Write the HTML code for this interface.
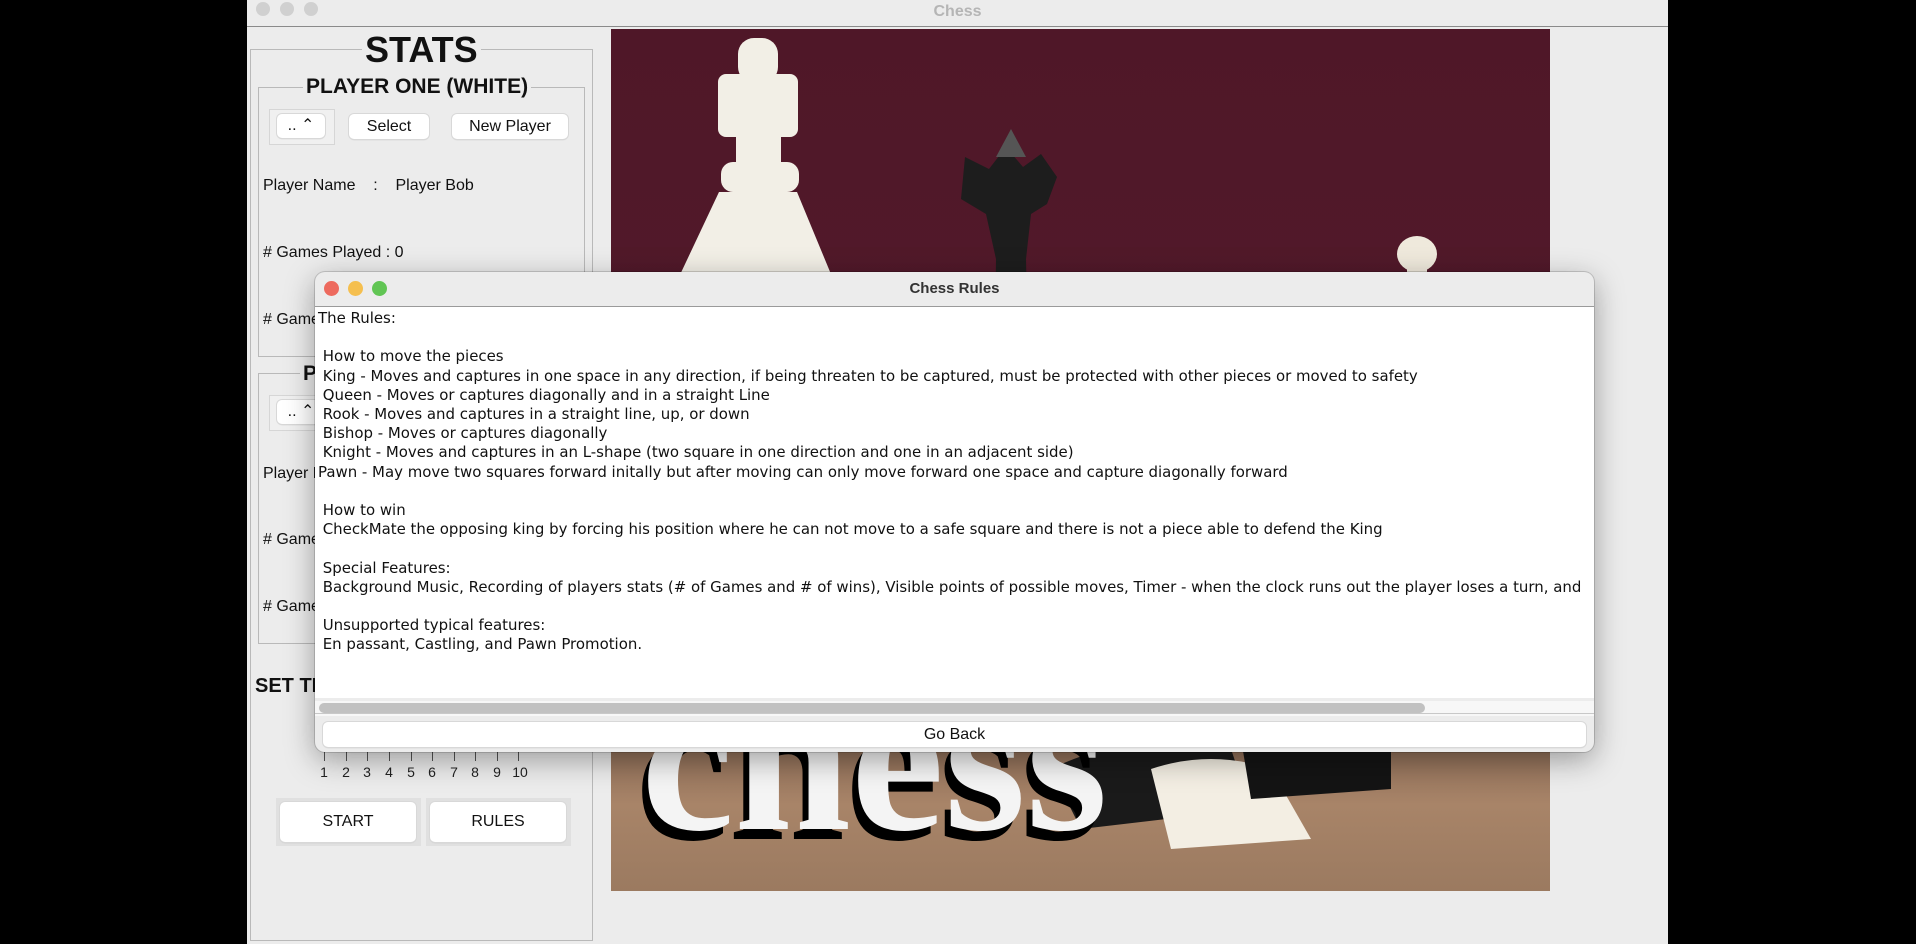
<!DOCTYPE html>
<html><head><meta charset="utf-8"><style>
*{margin:0;padding:0;box-sizing:border-box}
body{width:1916px;height:944px;background:#000;position:relative;overflow:hidden;font-family:"Liberation Sans",sans-serif}
.abs{position:absolute}
#win{left:247px;top:0;width:1421px;height:944px;background:#ececec}
.tb{left:0;top:0;width:1421px;height:27px;background:#ececec;border-bottom:1px solid #8a8a8a}
.dot{width:14px;height:14px;border-radius:50%;top:2px;background:#d0d0d0}
.lbl{font-size:16px;color:#111;white-space:nowrap}
.btn{background:#fff;border-radius:5px;box-shadow:0 0 0 1px #d8d8d8,0 1px 1px #bbb;font-size:16px;text-align:center;color:#111}
.box{border:1px solid #b9b9b9}
.legend{background:#ececec;font-weight:bold;color:#111;padding:0 3px;white-space:nowrap}
#dlg{left:315px;top:272px;width:1279px;height:480px;background:#ececec;border-radius:10px;box-shadow:0 8px 30px rgba(0,0,0,.35),0 0 0 1px rgba(0,0,0,.15);overflow:hidden}
#txt{left:0;top:34px;width:1279px;height:392px;background:#fff;border-top:1px solid #9a9a9a}
#txt pre{font-family:"DejaVu Sans",sans-serif;font-size:14.95px;line-height:19.2px;color:#111;position:absolute;left:3px;top:2px;white-space:pre}
.tk{position:absolute;top:752px;width:1px;height:9px;background:#555}
.nm{position:absolute;top:764px;font-size:14px;color:#222;width:20px;text-align:center}
</style></head><body>
<div id="win" class="abs">
 <div class="tb abs">
  <div class="dot abs" style="left:9px"></div><div class="dot abs" style="left:33px"></div><div class="dot abs" style="left:57px"></div>
  <div class="abs" style="left:0;width:1421px;top:3px;text-align:center;font-weight:bold;color:#b5b5b5;font-size:16px">Chess</div>
 </div>
 <div class="abs box" style="left:3px;top:49px;width:343px;height:892px"></div>
 <div class="abs legend" style="left:115px;top:30px;font-size:36px;line-height:40px">STATS</div>
 <div class="abs box" style="left:11px;top:87px;width:327px;height:270px"></div>
 <div class="abs legend" style="left:56px;top:75px;font-size:21px;line-height:24px">PLAYER ONE (WHITE)</div>
 <div class="abs" style="left:22px;top:109px;width:66px;height:36px;border:1px solid #d6d6d6;background:#f0f0f0"></div>
 <div class="abs btn" style="left:30px;top:114px;width:48px;height:24px;line-height:24px">.. ⌃</div>
 <div class="abs btn" style="left:102px;top:114px;width:80px;height:25px;line-height:25px">Select</div>
 <div class="abs btn" style="left:205px;top:114px;width:116px;height:25px;line-height:25px">New Player</div>
 <div class="abs lbl" style="left:16px;top:177px">Player Name&nbsp;&nbsp;&nbsp;&nbsp;:&nbsp;&nbsp;&nbsp;&nbsp;Player Bob</div>
 <div class="abs lbl" style="left:16px;top:244px"># Games Played : 0</div>
 <div class="abs lbl" style="left:16px;top:311px"># Games</div>
 <div class="abs box" style="left:11px;top:373px;width:327px;height:271px"></div>
 <div class="abs legend" style="left:53px;top:362px;font-size:21px;line-height:24px">P</div>
 <div class="abs" style="left:22px;top:395px;width:66px;height:36px;border:1px solid #d6d6d6;background:#f0f0f0"></div>
 <div class="abs btn" style="left:30px;top:400px;width:48px;height:24px;line-height:24px">.. ⌃</div>
 <div class="abs lbl" style="left:16px;top:465px">Player N</div>
 <div class="abs lbl" style="left:16px;top:531px"># Games</div>
 <div class="abs lbl" style="left:16px;top:598px"># Games</div>
 <div class="abs" style="left:8px;top:675px;font-weight:bold;font-size:20px;color:#111">SET TIME</div>
 <div class="tk" style="left:77px"></div><div class="tk" style="left:99px"></div><div class="tk" style="left:120px"></div><div class="tk" style="left:142px"></div><div class="tk" style="left:164px"></div><div class="tk" style="left:185px"></div><div class="tk" style="left:207px"></div><div class="tk" style="left:228px"></div><div class="tk" style="left:250px"></div><div class="tk" style="left:271px"></div>
 <div class="nm" style="left:67px">1</div><div class="nm" style="left:89px">2</div><div class="nm" style="left:110px">3</div><div class="nm" style="left:132px">4</div><div class="nm" style="left:154px">5</div><div class="nm" style="left:175px">6</div><div class="nm" style="left:197px">7</div><div class="nm" style="left:218px">8</div><div class="nm" style="left:240px">9</div><div class="nm" style="left:263px">10</div>
 <div class="abs" style="left:29px;top:798px;width:145px;height:48px;background:#e0e0e0"></div>
 <div class="abs" style="left:179px;top:798px;width:145px;height:48px;background:#e0e0e0"></div>
 <div class="abs btn" style="left:33px;top:802px;width:136px;height:40px;line-height:40px">START</div>
 <div class="abs btn" style="left:183px;top:802px;width:136px;height:40px;line-height:40px">RULES</div>
 <div class="abs" style="left:364px;top:29px;width:939px;height:862px;overflow:hidden;background:linear-gradient(180deg,#4f1728 0%,#531a2b 50%,#4a1525 75%,#8a6a55 82%,#a88468 90%,#9b7a60 100%)">
  <svg width="939" height="862" style="position:absolute;left:0;top:0">
   <g fill="#f2efe6">
    <rect x="127" y="9" width="40" height="45" rx="16"/>
    <rect x="107" y="45" width="80" height="63" rx="8"/>
    <rect x="125" y="100" width="45" height="40" />
    <rect x="110" y="133" width="78" height="30" rx="12"/>
    <path d="M108 163 L186 163 L222 250 L200 600 L90 600 L67 250 Z"/>
   </g>
   <path d="M354 128 L378 140 L395 118 L412 138 L430 125 L446 148 L436 175 L420 185 L415 230 L423 600 L380 600 L385 230 L375 185 L350 170 Z" fill="#1d1d1d"/>
   <path d="M385 128 L400 100 L415 128 Z" fill="#555"/>
   <ellipse cx="806" cy="225" rx="20" ry="18" fill="#efe9dc"/>
   <rect x="796" y="235" width="20" height="20" fill="#efe9dc"/>
   <path d="M440 740 Q520 700 620 720 L640 780 L470 800 Z" fill="#1a1a1a"/>
   <path d="M540 740 Q600 720 660 740 L700 810 L560 820 Z" fill="#f3eee3"/>
   <path d="M630 710 L780 705 L780 760 L640 770 Z" fill="#141414"/>
   <text x="30" y="800" font-family="Liberation Serif,serif" font-size="210" font-weight="bold" fill="#000" transform="translate(-6 10)">chess</text>
   <text x="30" y="800" font-family="Liberation Serif,serif" font-size="210" font-weight="bold" fill="#f4f4f4">chess</text>
  </svg>
 </div>
</div>
<div id="dlg" class="abs">
 <div class="abs" style="left:9px;top:9px;width:15px;height:15px;border-radius:50%;background:#ed6a5e"></div>
 <div class="abs" style="left:33px;top:9px;width:15px;height:15px;border-radius:50%;background:#f5bf4f"></div>
 <div class="abs" style="left:57px;top:9px;width:15px;height:15px;border-radius:50%;background:#61c554"></div>
 <div class="abs" style="left:0;top:8px;width:1279px;text-align:center;font-weight:bold;font-size:15px;color:#333">Chess Rules</div>
 <div id="txt" class="abs"><pre>The Rules:

 How to move the pieces
 King - Moves and captures in one space in any direction, if being threaten to be captured, must be protected with other pieces or moved to safety
 Queen - Moves or captures diagonally and in a straight Line
 Rook - Moves and captures in a straight line, up, or down
 Bishop - Moves or captures diagonally
 Knight - Moves and captures in an L-shape (two square in one direction and one in an adjacent side)
Pawn - May move two squares forward initally but after moving can only move forward one space and capture diagonally forward

 How to win
 CheckMate the opposing king by forcing his position where he can not move to a safe square and there is not a piece able to defend the King

 Special Features:
 Background Music, Recording of players stats (# of Games and # of wins), Visible points of possible moves, Timer - when the clock runs out the player loses a turn, and

 Unsupported typical features:
 En passant, Castling, and Pawn Promotion.</pre>
  <div class="abs" style="left:0;top:393px;width:1279px;height:16px;background:#f7f7f7;border-top:1px solid #ececec"></div>
  <div class="abs" style="left:4px;top:396px;width:1106px;height:10px;border-radius:5px;background:#c1c1c1"></div>
 </div>
 <div class="abs" style="left:0;top:441px;width:1279px;height:1px;background:#c8c8c8"></div>
 <div class="abs btn" style="left:8px;top:450px;width:1263px;height:25px;line-height:25px">Go Back</div>
</div>
</body></html>
